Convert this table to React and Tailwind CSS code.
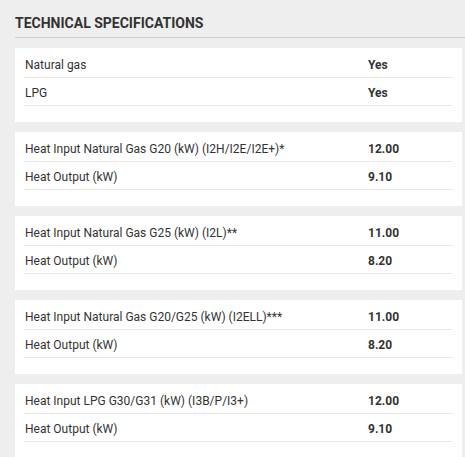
import React from "react";

const groups = [
  [
    ["Natural gas", "Yes"],
    ["LPG", "Yes"],
  ],
  [
    ["Heat Input Natural Gas G20 (kW) (I2H/I2E/I2E+)*", "12.00"],
    ["Heat Output (kW)", "9.10"],
  ],
  [
    ["Heat Input Natural Gas G25 (kW) (I2L)**", "11.00"],
    ["Heat Output (kW)", "8.20"],
  ],
  [
    ["Heat Input Natural Gas G20/G25 (kW) (I2ELL)***", "11.00"],
    ["Heat Output (kW)", "8.20"],
  ],
  [
    ["Heat Input LPG G30/G31 (kW) (I3B/P/I3+)", "12.00"],
    ["Heat Output (kW)", "9.10"],
  ],
];

const App = () => {
  return (
    <div className="h-[457px] w-[465px] overflow-hidden bg-[#eeeeee] pl-[15px] font-['Roboto',sans-serif] text-[#333333]">
      <div className="h-[38px] border-b border-[#cccccc] pt-[15px]">
        <h2 className="text-[14px] font-bold leading-[16px] text-[#333333]">
          TECHNICAL SPECIFICATIONS
        </h2>
      </div>
      <div className="flex flex-col gap-[10px] pt-[10px] pr-[3px]">
        {groups.map((rows, i) => (
          <div key={i} className="bg-white px-[9px] pt-[2px] pb-4">
            {rows.map(([label, value], j) => (
              <div
                key={j}
                className="grid h-[28px] grid-cols-[344px_1fr] items-center border-b border-[#e8e8e8] pt-[2px] text-[12px]"
              >
                <span className="pl-px">{label}</span>
                <span className="font-bold">{value}</span>
              </div>
            ))}
          </div>
        ))}
      </div>
    </div>
  );
};

export default App;
